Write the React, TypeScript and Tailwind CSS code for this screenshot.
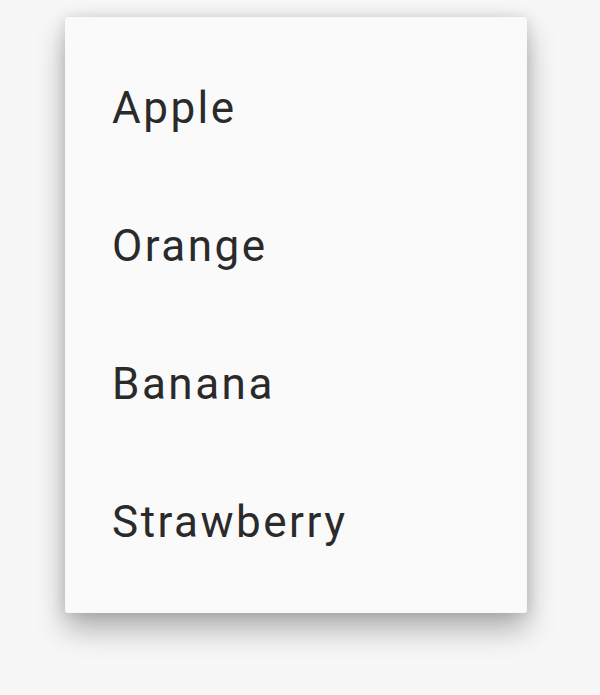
const FRUITS = ['Apple', 'Orange', 'Banana', 'Strawberry']

export default function App(): React.JSX.Element {
  return (
    <div className="w-[600px] h-[695px] bg-[#f7f7f7] pt-[17px] pl-[65px] font-['Roboto','Liberation_Sans',sans-serif]">
      {/* 弹出菜单 */}
      <div className="w-[462px] rounded-[3px] bg-[#fafafa] py-[22px] shadow-[0_16px_30px_rgba(0,0,0,0.3),0_0_14px_rgba(0,0,0,0.12)]">
        {FRUITS.map((f) => (
          <div key={f} className="h-[138px] flex items-center pl-[47px] text-[44px] tracking-[2.5px] text-[#2a2a2a]">
            {f}
          </div>
        ))}
      </div>
    </div>
  )
}
